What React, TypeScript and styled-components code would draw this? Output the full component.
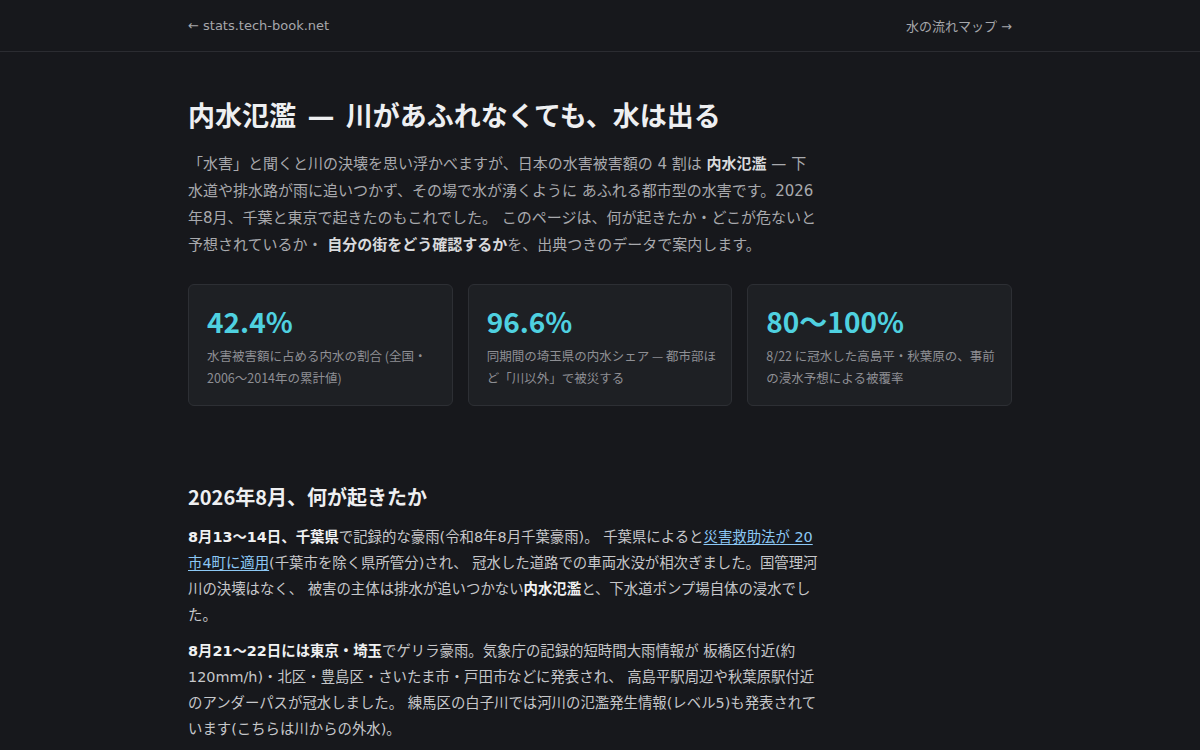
import styled, { createGlobalStyle } from 'styled-components'

// Latin glyphs come from DejaVu (wide, close to the Hiragino Latin set),
// kana and kanji fall through to Noto CJK.
const textStack = `'DejaVu Sans', 'Noto Sans CJK JP', sans-serif`
const cjkStack = `'Noto Sans CJK JP', 'Noto Sans', sans-serif`

const GlobalStyle = createGlobalStyle`
	html, body {
		margin: 0;
		padding: 0;
		background: #17181c;
	}
	body {
		font-family: ${cjkStack};
		color: #b4b5b8;
		-webkit-font-smoothing: antialiased;
	}
`

const stats = [
	{
		value: '42.4%',
		label: '水害被害額に占める内水の割合 (全国・2006〜2014年の累計値)',
	},
	{
		value: '96.6%',
		label: '同期間の埼玉県の内水シェア — 都市部ほど「川以外」で被災する',
	},
	{
		value: '80〜100%',
		label: '8/22 に冠水した高島平・秋葉原の、事前の浸水予想による被覆率',
	},
]

export default function App() {
	return (
		<>
			<GlobalStyle />
			<TopBar>
				<TopInner>
					<NavLink href="#">← stats.tech-book.net</NavLink>
					<NavLink href="#">水の流れマップ →</NavLink>
				</TopInner>
			</TopBar>
			<Main>
				<Title>内水氾濫 — 川があふれなくても、水は出る</Title>
				<Lead>
					「水害」と聞くと川の決壊を思い浮かべますが、日本の水害被害額の 4 割は{' '}
					<strong>内水氾濫</strong> — 下水道や排水路が雨に追いつかず、その場で水が湧くように
					あふれる都市型の水害です。2026年8月、千葉と東京で起きたのもこれでした。
					このページは、何が起きたか・どこが危ないと予想されているか・{' '}
					<strong>自分の街をどう確認するか</strong>を、出典つきのデータで案内します。
				</Lead>
				<StatGrid>
					{stats.map(s => (
						<StatCard key={s.value}>
							<StatValue>{s.value}</StatValue>
							<StatLabel>{s.label}</StatLabel>
						</StatCard>
					))}
				</StatGrid>
				<Section>
					<SectionTitle>2026年8月、何が起きたか</SectionTitle>
					<Body>
						<strong>8月13〜14日、千葉県</strong>で記録的な豪雨(令和8年8月千葉豪雨)。
						千葉県によると<Link href="#">災害救助法が 20 市4町に適用</Link>
						(千葉市を除く県所管分)され、
						冠水した道路での車両水没が相次ぎました。国管理河川の決壊はなく、
						被害の主体は排水が追いつかない<strong>内水氾濫</strong>と、下水道ポンプ場自体の浸水でした。
					</Body>
					<Body>
						<strong>8月21〜22日には東京・埼玉</strong>でゲリラ豪雨。気象庁の記録的短時間大雨情報が
						板橋区付近(約120mm/h)・北区・豊島区・さいたま市・戸田市などに発表され、
						高島平駅周辺や秋葉原駅付近のアンダーパスが冠水しました。
						練馬区の白子川では河川の氾濫発生情報(レベル5)も発表されています(こちらは川からの外水)。
					</Body>
				</Section>
			</Main>
		</>
	)
}

const TopBar = styled.header`
	border-bottom: 1px solid #2b2c31;
`

const TopInner = styled.nav`
	width: 824px;
	margin: 0 auto;
	height: 51px;
	display: flex;
	align-items: center;
	justify-content: space-between;
`

const NavLink = styled.a`
	font-family: ${textStack};
	font-size: 13px;
	color: #a6a7ab;
	text-decoration: none;
`

const Main = styled.main`
	width: 824px;
	margin: 0 auto;
	padding-top: 46px;
`

const Title = styled.h1`
	margin: 0 0 15px;
	font-family: ${textStack};
	font-size: 27px;
	line-height: 38px;
	font-weight: 700;
	word-spacing: 2px;
	color: #eeeff1;
`

const Lead = styled.p`
	margin: 0;
	max-width: 632px;
	font-family: ${textStack};
	font-size: 15px;
	line-height: 27px;
	color: #a8a9ad;

	strong {
		color: #d9dadc;
		font-weight: 700;
	}
`

const StatGrid = styled.div`
	margin-top: 25px;
	display: grid;
	grid-template-columns: repeat(3, 1fr);
	gap: 15px;
`

const StatCard = styled.div`
	background: #1e2024;
	border: 1px solid #2d2f34;
	border-radius: 6px;
	padding: 18px 13px 14px 18px;
	min-height: 122px;
	box-sizing: border-box;
`

const StatValue = styled.div`
	font-size: 28px;
	line-height: 36px;
	font-weight: 700;
	color: #4fd1e0;
`

const StatLabel = styled.div`
	margin-top: 6px;
	font-size: 12.5px;
	line-height: 22px;
	color: #8e8f94;
`

const Section = styled.section`
	margin-top: 76px;
	max-width: 632px;
`

const SectionTitle = styled.h2`
	margin: 0 0 12px;
	font-size: 20px;
	line-height: 30px;
	font-weight: 700;
	color: #eeeff1;
`

const Body = styled.p`
	margin: 0 0 10px;
	font-family: ${textStack};
	font-size: 14.4px;
	line-height: 26px;
	color: #c6c7ca;

	strong {
		color: #f0f1f2;
		font-weight: 700;
	}
`

const Link = styled.a`
	color: #8cc8f5;
	text-decoration: underline;
	text-underline-offset: 2px;
`
